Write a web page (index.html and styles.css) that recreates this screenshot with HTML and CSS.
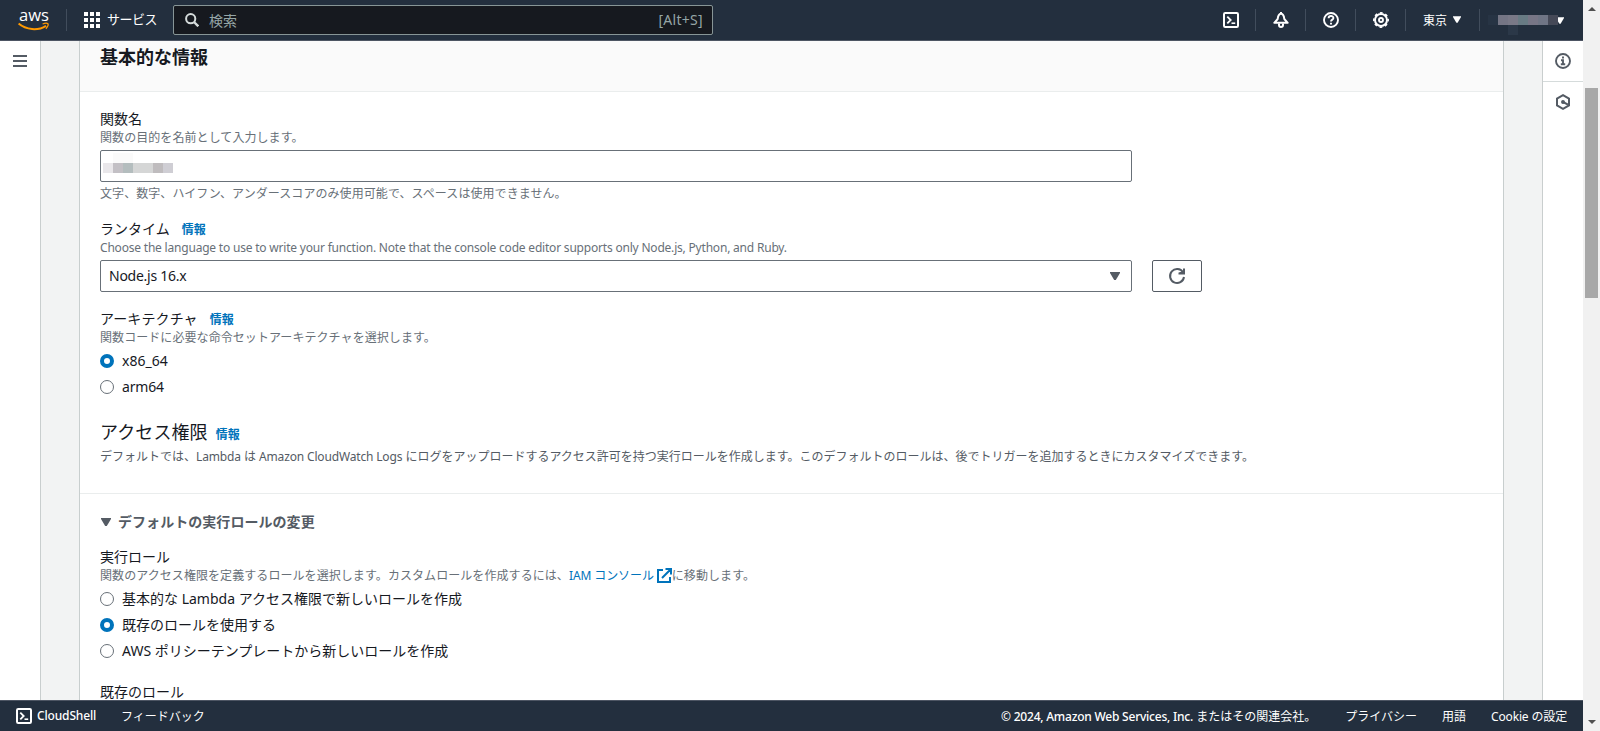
FILE: index.html
```html
<!DOCTYPE html>
<html lang="ja">
<head>
<meta charset="utf-8">
<title>関数の作成 - Lambda</title>
<link rel="stylesheet" href="styles.css">
</head>
<body>
<svg class="defs" aria-hidden="true">
  <symbol id="shell" viewBox="0 0 16 16"><g fill="none" stroke="currentColor" stroke-width="2"><rect x="1" y="1" width="14" height="14" rx="1.2"/><path d="M4.3 4.6 7.7 8l-3.4 3.4" stroke-width="1.8"/><path d="M8.5 11.2h3.7" stroke-width="1.6"/></g></symbol>
  <symbol id="caret" viewBox="0 0 10 8"><path d="M0 0h10v1L5.8 8H4.2L0 1z" fill="currentColor"/></symbol>
</svg>
<div class="window">
  <div class="app">
    <header class="topbar">
      <svg class="aws" viewBox="0 0 32 26"><text x="1" y="14" textLength="30" lengthAdjust="spacingAndGlyphs" class="aws-word">aws</text><path d="M.6 16.600C8 23 20 24 28 18.800" fill="none" stroke="#f90" stroke-width="2"/><path d="M24.600 17c2.500-1 4.600-.9 5.300-.3.5.8-.4 3.300-2 5" fill="none" stroke="#f90" stroke-width="1.300"/></svg>
      <i class="sep sep-logo"></i>
      <svg class="grid" viewBox="0 0 16 16" fill="#fff"><path d="M0 0h4v4H0zM6 0h4v4H6zM12 0h4v4h-4zM0 6h4v4H0zM6 6h4v4H6zM12 6h4v4h-4zM0 12h4v4H0zM6 12h4v4H6zM12 12h4v4h-4z"/></svg>
      <span class="services">サービス</span>
      <div class="search">
        <svg width="14" height="14" viewBox="0 0 14 14" fill="none" stroke="#d5dbdb" stroke-width="2"><circle cx="5.700" cy="5.700" r="4.600"/><path d="m9 9 4.300 4.300" stroke-width="2.400"/></svg>
        <span class="placeholder">検索</span><span class="shortcut">[Alt+S]</span>
      </div>
      <nav class="tools">
        <span class="tool"><svg class="ic"><use href="#shell"/></svg></span>
        <span class="tool"><svg class="ic" viewBox="0 0 16 16" fill="none" stroke="#fff" stroke-width="2" stroke-linejoin="round"><path d="M8 1.500C5.500 2 5 4 4.700 7L1.300 10.800h13.400L11.300 7C11 4 10.500 2 8 1.500zM8 0v2"/><path d="M6 11.500v1.500q0 2 2 2t2-2v-1.500"/></svg></span>
        <span class="tool"><svg class="ic" viewBox="0 0 16 16" fill="none" stroke="#fff" stroke-width="1.900"><circle cx="8" cy="8" r="7"/><path d="M5.600 6.300C5.600 3.300 10.400 3.400 10.400 6c0 1.700-2.400 1.600-2.400 3.500M8 10.700v1.900"/></svg></span>
        <span class="tool"><svg class="ic" viewBox="0 0 16 16" fill="none" stroke="#fff"><circle cx="8" cy="8" r="6" stroke-width="2"/><circle cx="8" cy="8" r="7.200" stroke-width="1.500" stroke-dasharray="2.830 2.825" stroke-dashoffset="1.400"/><circle cx="8" cy="8" r="2" stroke-width="1.900"/></svg></span>
        <span class="region">東京<svg class="mini"><use href="#caret"/></svg></span>
        <span class="account">
          <span class="mosaic"><b class="m1"></b><b class="m2"></b><b class="m3"></b><b class="m4"></b><b class="m5"></b><b class="m6"></b></span>
          <svg class="mini"><use href="#caret"/></svg>
        </span>
      </nav>
    </header>
    <div class="body">
      <aside class="rail-left"><i></i><i></i><i></i></aside>
      <main class="card">
        <div class="card-head"><h2>基本的な情報</h2></div>
        <section class="fields">
          <div class="label">関数名</div>
          <div class="hint">関数の目的を名前として入力します。</div>
          <div class="input"><span class="blur"><b class="g1"></b><b class="g2"></b><b class="g3"></b><b class="g4"></b><b class="g5"></b><b class="g6"></b><b class="g7"></b></span></div>
          <div class="hint below">文字、数字、ハイフン、アンダースコアのみ使用可能で、スペースは使用できません。</div>
          <div class="label runtime">ランタイム<a class="info">情報</a></div>
          <div class="hint en">Choose the language to use to write your function. Note that the console code editor supports only Node.js, Python, and Ruby.</div>
          <div class="row">
            <div class="input select"><span class="value">Node.js 16.x</span><svg class="tri"><use href="#caret"/></svg></div>
            <div class="refresh"><svg width="18" height="18" viewBox="0 0 18 18" fill="none" stroke="#545b64" stroke-width="2"><path d="M15 5.300A7 7 0 1 0 16 10"/><path d="M16 1.500v5h-5.500M15.500 6 11.500 6"/></svg></div>
          </div>
          <div class="label arch">アーキテクチャ<a class="info">情報</a></div>
          <div class="hint">関数コードに必要な命令セットアーキテクチャを選択します。</div>
          <div class="radio first"><i class="on"></i><span>x86_64</span></div>
          <div class="radio"><i></i><span class="arm">arm64</span></div>
          <div class="access">アクセス権限<a class="info">情報</a></div>
          <div class="desc">デフォルトでは、<span class="lat">Lambda</span> は <span class="lat">Amazon CloudWatch Logs</span> にログをアップロードするアクセス許可を持つ実行ロールを作成します。このデフォルトのロールは、後でトリガーを追加するときにカスタマイズできます。</div>
        </section>
        <section class="roles">
          <div class="expander"><svg class="tri"><use href="#caret"/></svg>デフォルトの実行ロールの変更</div>
          <div class="label">実行ロール</div>
          <div class="hint">関数のアクセス権限を定義するロールを選択します。カスタムロールを作成するには、<a class="iam">IAM コンソール<svg width="16" height="16" viewBox="0 0 16 16" fill="none" stroke="currentColor" stroke-width="2"><path d="M7 2H2v12h12V9M9.500 1H15v5.500M15 1 6 10"/></svg></a>に移動します。</div>
          <div class="radio first"><i></i><span>基本的な Lambda アクセス権限で新しいロールを作成</span></div>
          <div class="radio"><i class="on"></i><span>既存のロールを使用する</span></div>
          <div class="radio"><i></i><span>AWS ポリシーテンプレートから新しいロールを作成</span></div>
          <div class="label existing">既存のロール</div>
        </section>
      </main>
      <aside class="rail-right">
        <span class="help"><svg width="16" height="16" viewBox="0 0 16 16" fill="none" stroke="#545b64" stroke-width="1.900"><circle cx="8" cy="8" r="7"/><path d="M8 3.500v2M6 7.200h2v4.300M5.800 11.300h4.400"/></svg></span>
        <span class="help2"><svg width="16" height="16" viewBox="0 0 16 16" fill="none" stroke="#545b64" stroke-width="2"><path d="M8 1.200 14 4.600v6.800l-6 3.400-6-3.400V4.600z"/><path d="m8 8 5 2.600"/><circle cx="8" cy="8" r="1.300" fill="#545b64" stroke-width="1.300"/></svg></span>
      </aside>
    </div>
    <footer class="footer">
      <svg class="ic"><use href="#shell"/></svg><span class="cs">CloudShell</span><span class="fb">フィードバック</span>
      <span class="copy"><span class="copy-lat">© 2024, Amazon Web Services, Inc.</span> またはその関連会社。</span><span class="priv">プライバシー</span><span class="terms">用語</span><span class="cookie">Cookie の設定</span>
    </footer>
  </div>
  <div class="scrollbar"><i class="up"></i><i class="thumb"></i><i class="down"></i></div>
</div>
</body>
</html>
```
FILE: styles.css
```css
* { box-sizing: border-box; }
body { margin: 0; overflow: hidden; font-family: "Noto Sans", "Noto Sans CJK JP", sans-serif; font-size: 14px; color: #16191f; }
svg { display: block; flex: none; }
b, i { display: block; flex: none; }
.defs { position: absolute; width: 0; height: 0; }
.window { display: flex; width: 1600px; height: 731px; }
.app { width: 1583px; height: 731px; display: flex; flex-direction: column; white-space: nowrap; }

.topbar { height: 41px; flex: none; display: flex; align-items: center; background: #232f3e; border-bottom: 1px solid #4d5563; color: #fff; }
.aws { width: 32px; height: 26px; margin-left: 18px; overflow: visible; }
.aws-word { font: 500 17px "Open Sans", sans-serif; fill: #fff; }
.sep { width: 1px; height: 22px; background: #414d5c; }
.sep-logo { margin-left: 16px; }
.grid { width: 16px; height: 16px; margin-left: 17px; }
.services { width: 66px; margin-left: 7px; font-size: 13px; line-height: 20px; letter-spacing: -.5px; padding-bottom: 2px; }
.search { width: 540px; height: 30px; display: flex; align-items: center; padding: 0 9px 0 11px; background: #16191f; border: 1px solid #879596; border-radius: 2px; color: #95a5a6; }
.search span { padding-bottom: 1px; }
.placeholder { margin-left: 10px; }
.shortcut { margin-left: auto; letter-spacing: .3px; }
.tools { margin-left: auto; display: flex; align-items: center; height: 40px; }
.tool { width: 50px; display: flex; justify-content: center; align-items: center; height: 22px; border-right: 1px solid #414d5c; }
.ic { width: 16px; height: 16px; }
.region { width: 74px; height: 22px; display: flex; align-items: center; justify-content: center; gap: 6px; border-right: 1px solid #414d5c; font-size: 12px; padding: 0 1px 1px 0; }
.mini { width: 8px; height: 7px; }
.account { width: 103px; display: flex; align-items: center; padding-left: 18px; }
.account .mini { margin-left: -2px; }
.mosaic { display: flex; height: 10px; position: relative; z-index: 1; }
.mosaic b { width: 10px; height: 10px; }
.mosaic .m1 { background: #747584; box-shadow: -10px 0 #273444; }
.mosaic .m2 { background: #797987; box-shadow: 0 10px #2b3848; }
.m3 { background: #687b84; }
.m4 { background: #777686; }
.m5 { background: #6f7585; }
.m6 { background: #454957; }

.body { flex: 1; min-height: 0; display: flex; background: #f2f3f3; }
.rail-left { width: 41px; margin-right: 38px; background: #fff; border-right: 1px solid #c9cece; padding: 14px 13px; }
.rail-left i { height: 2px; width: 14px; background: #545b64; margin-bottom: 3px; }
.card { width: 1425px; border: solid #c8cece; border-width: 0 1px; background: #fff; overflow: hidden; }
.card-head { height: 51px; background: #fafafa; border-bottom: 1px solid #eaeded; padding: 3px 20px; }
h2 { margin: 0; font-size: 18px; line-height: 26px; font-weight: 700; }
.fields { height: 402px; padding: 16px 20px 0; border-bottom: 1px solid #eaeded; }
.label { line-height: 22px; height: 22px; }
.hint { font-size: 12px; line-height: 16px; height: 16px; color: #687078; letter-spacing: .07px; }
.en { letter-spacing: -.2px; }
.input { width: 1032px; height: 32px; margin-top: 4px; border: 1px solid #687078; border-radius: 2px; background: #fff; display: flex; align-items: center; }
.blur { display: flex; margin-left: 2px; }
.blur b { width: 10px; height: 10px; margin-top: 3px; }
.blur .g2, .blur .g3 { box-shadow: 0 -10px #fafafa; }
.g1 { background: #e9e7ea; }
.g2 { background: #c3c0c5; }
.g3 { background: #b4bdbe; }
.g4, .g5 { background: #d5d6d6; }
.g6 { background: #bfbcbe; }
.g7 { background: #cfced4; }
.below { margin-top: 4px; }
.runtime, .arch { margin-top: 16px; }
.info { color: #0073bb; font-size: 12px; font-weight: 700; margin-left: 12px; }
.arch { letter-spacing: .1px; }
.row { display: flex; gap: 20px; }
.select { padding: 0 11px 0 8px; justify-content: space-between; }
.value { letter-spacing: -.25px; padding-bottom: 1px; }
.tri { width: 10px; height: 8px; color: #545b64; }
.refresh { width: 50px; height: 32px; margin-top: 4px; border: 1px solid #545b64; border-radius: 2px; display: flex; align-items: center; justify-content: center; }
.radio { height: 26px; display: flex; align-items: center; gap: 8px; }
.radio span { padding-bottom: 1px; }
.roles .radio span { padding-bottom: 2px; }
.radio.first { margin-top: 2px; }
.radio i { width: 14px; height: 14px; border: 1px solid #687078; border-radius: 50%; }
.radio .on { border: 4px solid #0073bb; }
.arm { letter-spacing: -.2px; }
.access { margin-top: 18px; height: 30px; font-size: 18px; line-height: 28px; letter-spacing: .1px; }
.access .info { margin-left: 8px; }
.desc { font-size: 12px; line-height: 18px; height: 18px; color: #545b64; letter-spacing: 0; }
.lat { letter-spacing: -.16px; }
.roles { padding: 18px 20px 0; }
.expander { height: 20px; line-height: 20px; font-weight: 700; color: #545b64; display: flex; align-items: center; gap: 7px; margin-bottom: 14px; padding-left: 1px; letter-spacing: .05px; }
.iam { color: #0073bb; letter-spacing: -.1px; }
.iam svg { display: inline-block; vertical-align: -4px; margin-left: 2px; }
.existing { margin-top: 17px; }
.rail-right { width: 41px; margin-left: 38px; background: #fff; border-left: 1px solid #c9cece; }
.help, .help2 { height: 41px; display: flex; align-items: center; justify-content: center; }
.help { border-bottom: 1px solid #d5dbdb; }
.help2 { height: 40px; }

.footer { height: 31px; flex: none; display: flex; align-items: center; padding: 0 16px 1px; background: #232f3e; border-top: 1px solid #4d5563; color: #fff; font-size: 12px; }
.cs { margin-left: 5px; width: 60px; font-weight: 500; letter-spacing: -.15px; }
.fb { margin-left: 24px; }
.copy { margin-left: auto; }
.copy-lat { font-weight: 500; letter-spacing: -.22px; }
.priv { margin-left: 29px; }
.terms { margin-left: 25px; }
.cookie { margin-left: 25px; letter-spacing: -.15px; }

.scrollbar { width: 17px; height: 731px; display: flex; flex-direction: column; align-items: center; background: #f1f1f1; }
.up { margin-top: 7px; border: 4px solid transparent; border-top: 0; border-bottom-color: #505050; }
.thumb { width: 13px; height: 210px; margin-top: 77px; background: #a8a8a8; }
.down { margin: auto 0 7px; border: 4px solid transparent; border-bottom: 0; border-top-color: #505050; }
```
